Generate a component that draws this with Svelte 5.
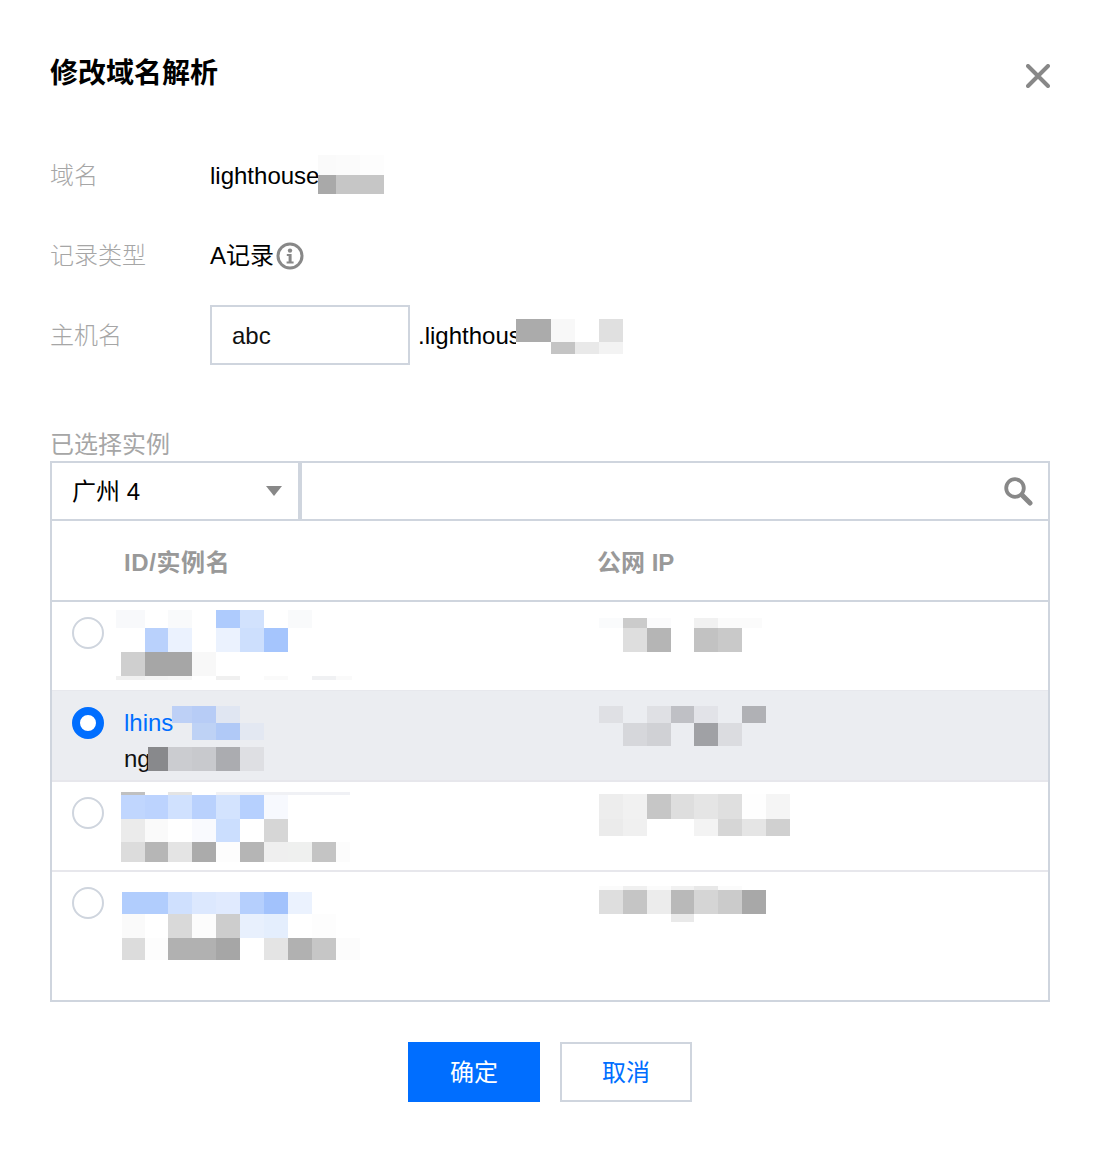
<script>
  // Mosaic cells that obscure private data: [x0, y0, x1, y1, colour] in page coordinates.
  const band = (y0, y1, cells) => cells.map(([x0, x1, c]) => [x0, y0, x1, y1, c]);
  const cells = [
    ...band(155, 175, [[318, 336, '#fafafa'], [336, 360, '#fbfbfb'], [360, 384, '#fdfdfd']]),
    ...band(175, 194, [[318, 336, '#a9a9a9'], [336, 384, '#c6c6c6']]),
    ...band(319, 342, [[516, 551, '#ababab'], [551, 575, '#f8f8f8'], [575, 599, '#fff'], [599, 623, '#e0e0e0']]),
    ...band(342, 354, [[516, 551, '#fff'], [551, 575, '#c4c4c4'], [575, 599, '#e9e9e9'], [599, 623, '#f3f3f3']]),

    ...band(610, 628, [[116, 145, '#f8f9fb'], [168, 192, '#f9fafb'], [216, 240, '#aecbfd'], [240, 264, '#d2e2fd'], [288, 312, '#f9fafb']]),
    ...band(628, 652, [[145, 168, '#b9d1fc'], [168, 192, '#ebf2fe'], [216, 240, '#ebf2fe'], [240, 264, '#cddffd'], [264, 288, '#a5c5fd']]),
    ...band(652, 676, [[121, 145, '#cfcfcf'], [145, 168, '#a6a6a6'], [168, 192, '#a6a6a6'], [192, 216, '#f8f8f8']]),
    ...band(676, 680, [[116, 145, '#f0f0f0'], [145, 168, '#f4f4f4'], [168, 192, '#f6f6f6'], [216, 240, '#f0f0f0'], [264, 288, '#fafafa'], [312, 336, '#f0f1f3'], [336, 352, '#fafafa']]),

    ...band(706, 723, [[172, 192, '#bdd0f6'], [192, 216, '#b7ccf6'], [216, 240, '#e0e6f2']]),
    ...band(723, 740, [[192, 216, '#bed2f5'], [216, 240, '#b0c9f7'], [240, 264, '#e3e8f2']]),
    ...band(747, 771, [[148, 168, '#88898c'], [168, 192, '#cbccd0'], [192, 216, '#c8c9cd'], [216, 240, '#abacb0'], [240, 264, '#dedfe3']]),

    ...band(792, 795, [[121, 145, '#c0c0c0'], [168, 192, '#e4e4e4'], [216, 350, '#f0f1f5']]),
    ...band(795, 819, [[121, 145, '#c0d6fe'], [145, 168, '#bcd3fe'], [168, 192, '#d0e1fe'], [192, 216, '#b9d1fd'], [216, 240, '#d3e3fe'], [240, 264, '#b6d0fe'], [264, 288, '#f7f9fe']]),
    ...band(819, 842, [[121, 145, '#ebebeb'], [145, 168, '#fafafa'], [192, 216, '#f9fafe'], [216, 240, '#cbdefe'], [264, 288, '#d6d6d6']]),
    ...band(842, 862, [[121, 145, '#dcdcdc'], [145, 168, '#b6b6b6'], [168, 192, '#e4e4e4'], [192, 216, '#ababab'], [216, 240, '#fdfdfd'], [240, 264, '#b5b5b5'], [264, 288, '#efefef'], [288, 312, '#eff0ef'], [312, 336, '#c4c4c4'], [336, 350, '#fcfcfc']]),

    ...band(892, 914, [[122, 168, '#b1cdfd'], [168, 192, '#cfe0fe'], [192, 216, '#dce8fe'], [216, 240, '#e0eafe'], [240, 264, '#b5cffd'], [264, 288, '#a2c2fc'], [288, 312, '#ebf2fe']]),
    ...band(914, 938, [[122, 145, '#fafafa'], [168, 192, '#d9d9d9'], [192, 216, '#fcfcfc'], [216, 240, '#cdcdcd'], [240, 264, '#e8f0fd'], [264, 288, '#e4eefd'], [312, 336, '#fdfdfd']]),
    ...band(938, 960, [[122, 145, '#dcdcdc'], [145, 168, '#fdfdfd'], [168, 216, '#b1b1b1'], [216, 240, '#a6a6a6'], [264, 288, '#e4e4e4'], [288, 312, '#b1b1b1'], [312, 336, '#c6c6c6'], [336, 360, '#fcfcfc']]),

    ...band(618, 628, [[599, 623, '#fafbfc'], [623, 647, '#cbcbcb'], [647, 671, '#fbfbfc'], [694, 718, '#f1f1f1'], [718, 762, '#fbfbfb']]),
    ...band(628, 652, [[623, 647, '#dedede'], [647, 671, '#b5b5b5'], [694, 718, '#c2c2c2'], [718, 742, '#c9c9c9']]),
    ...band(706, 723, [[599, 623, '#dfe0e4'], [647, 671, '#dfe0e4'], [671, 694, '#bfc0c5'], [694, 718, '#e2e3e8'], [742, 766, '#b0b1b5']]),
    ...band(723, 746, [[623, 647, '#d6d7db'], [647, 671, '#d0d1d5'], [694, 718, '#a0a1a5'], [718, 742, '#dbdce0']]),
    ...band(794, 819, [[599, 623, '#ededed'], [623, 647, '#f1f1f1'], [647, 671, '#c6c6c6'], [671, 694, '#dedede'], [694, 718, '#e5e5e5'], [718, 742, '#dfdfdf'], [742, 766, '#fefefe'], [766, 790, '#f5f5f5']]),
    ...band(819, 836, [[599, 623, '#ebebeb'], [623, 647, '#f0f0f0'], [694, 718, '#f3f3f3'], [718, 742, '#d6d6d6'], [742, 766, '#e5e5e5'], [766, 790, '#d0d0d0']]),
    ...band(886, 890, [[599, 623, '#fbfbfb'], [623, 647, '#f0f0f0'], [647, 671, '#fbfbfb'], [671, 694, '#f1f1f1'], [694, 718, '#e8e8e8'], [718, 742, '#fbfbfb']]),
    ...band(890, 914, [[599, 623, '#dedede'], [623, 647, '#c5c5c5'], [647, 671, '#ececec'], [671, 694, '#b9b9b9'], [694, 718, '#d5d5d5'], [718, 742, '#cbcbcb'], [742, 766, '#a8a8a8']]),
    ...band(914, 922, [[671, 694, '#e9e9e9']])
  ];
</script>

<div class="dialog">
  <div class="head">
    <h1>修改域名解析</h1>
    <svg class="close" width="24" height="24" viewBox="0 0 24 24" aria-label="关闭">
      <path d="M2 2 L22 22 M22 2 L2 22" stroke="#888" stroke-width="4" stroke-linecap="round" />
    </svg>
  </div>

  <div class="fields">
    <div class="field">
      <span class="label">域名</span>
      <span>lighthouse</span>
    </div>
    <div class="field">
      <span class="label">记录类型</span>
      <span>A记录</span>
      <svg class="info" width="28" height="28" viewBox="0 0 28 28" aria-label="说明">
        <circle cx="14" cy="14" r="12" fill="none" stroke="#888" stroke-width="3" />
        <circle cx="14" cy="8.6" r="2.2" fill="#888" />
        <path d="M10.8 12 H15.6 V19.4 H17.6 V21.4 H10.6 V19.4 H12.6 V14 H10.8 Z" fill="#888" />
      </svg>
    </div>
    <div class="field">
      <span class="label">主机名</span>
      <div class="input">abc</div>
      <span class="suffix">.lighthous</span>
    </div>
  </div>

  <div class="caption">已选择实例</div>
  <div class="picker">
    <div class="filter">
      <div class="select">
        <span class="select-value">广州 4</span>
        <span class="arrow"></span>
      </div>
      <div class="search">
        <svg width="30" height="30" viewBox="0 0 30 30" aria-label="搜索">
          <circle cx="12" cy="12" r="8.8" fill="none" stroke="#888" stroke-width="3.8" />
          <path d="M19.5 19.5 L27 27" stroke="#888" stroke-width="5" stroke-linecap="round" />
        </svg>
      </div>
    </div>

    <div class="thead">
      <span class="col-name">ID/实例名</span>
      <span class="col-ip">公网 IP</span>
    </div>

    <div class="row first"><span class="radio"></span></div>
    <div class="row selected">
      <span class="radio on"></span>
      <div class="name">
        <div class="link">lhins</div>
        <div>ng</div>
      </div>
    </div>
    <div class="row third"><span class="radio"></span></div>
    <div class="row last"><span class="radio"></span></div>
  </div>

  <div class="footer">
    <button class="btn primary">确定</button>
    <button class="btn">取消</button>
  </div>

  {#each cells as [x0, y0, x1, y1, c]}
    <i class="cell" style="left:{x0}px;top:{y0}px;width:{x1 - x0}px;height:{y1 - y0}px;background:{c}"></i>
  {/each}
</div>

<style>
  :global(body) {
    margin: 0;
    background: #fff;
  }
  .dialog {
    position: relative;
    box-sizing: border-box;
    width: 1098px;
    height: 1152px;
    padding: 52px 48px 0 50px;
    font-family: "Liberation Sans", "Noto Sans CJK SC", sans-serif;
    font-size: 24px;
    line-height: 36px;
    color: #000;
    overflow: hidden;
  }
  .head {
    display: flex;
    justify-content: space-between;
    align-items: flex-start;
    height: 40px;
  }
  h1 {
    margin: 0;
    font-size: 28px;
    line-height: 44px;
    font-weight: 700;
  }
  .close {
    margin-top: 12px;
  }
  .fields {
    display: flex;
    flex-direction: column;
    gap: 20px;
    margin-top: 53px;
  }
  .field {
    display: flex;
    align-items: center;
    height: 60px;
  }
  .field > span {
    padding-top: 2px;
  }
  .label {
    width: 160px;
    color: #a6a6a6;
    font-weight: 300;
  }
  .info {
    margin: 2px 0 0 2px;
  }
  .input {
    box-sizing: border-box;
    width: 200px;
    height: 60px;
    padding: 0 20px;
    border: 2px solid #cfd5de;
    line-height: 58px;
    color: #111;
  }
  .suffix {
    margin-left: 8px;
  }
  .caption {
    box-sizing: border-box;
    height: 36px;
    margin-top: 60px;
    padding-top: 2px;
    color: #a6a6a6;
  }
  .picker {
    box-sizing: border-box;
    height: 541px;
    border: 2px solid #cfd5de;
  }
  .filter {
    display: flex;
    height: 58px;
    border-bottom: 2px solid #cfd5de;
    box-sizing: border-box;
  }
  .select {
    box-sizing: border-box;
    display: flex;
    align-items: center;
    justify-content: space-between;
    width: 250px;
    padding: 0 16px 0 20px;
    border-right: 4px solid #cfd5de;
  }
  .select-value {
    padding-top: 2px;
  }
  .arrow {
    width: 0;
    height: 0;
    border-left: 8px solid transparent;
    border-right: 8px solid transparent;
    border-top: 10px solid #888;
  }
  .search {
    flex: 1;
    display: flex;
    align-items: center;
    justify-content: flex-end;
    padding-right: 15px;
  }
  .thead {
    box-sizing: border-box;
    display: flex;
    align-items: center;
    height: 81px;
    padding-top: 4px;
    border-bottom: 2px solid #cfd5de;
    font-weight: 700;
    color: #999;
  }
  .col-name {
    width: 473px;
    margin-left: 72px;
    letter-spacing: 0.6px;
  }
  .row {
    box-sizing: border-box;
    display: flex;
    align-items: flex-start;
    padding: 15px 0 0 20px;
  }
  .first {
    height: 88px;
  }
  .selected {
    height: 92px;
    padding-top: 16px;
    background: #ebedf1;
    border-top: 1px solid #e7e8ed;
    border-bottom: 2px solid #e7e7ec;
  }
  .third {
    height: 90px;
    padding-top: 15px;
    border-bottom: 2px solid #e7e7ec;
  }
  .last {
    height: 128px;
  }
  .radio {
    box-sizing: border-box;
    flex: none;
    width: 32px;
    height: 32px;
    border: 2px solid #cfd5de;
    border-radius: 50%;
    background: #fff;
  }
  .radio.on {
    border: 8px solid #006eff;
  }
  .name {
    margin: -2px 0 0 20px;
    color: #111;
  }
  .link {
    color: #006eff;
  }
  .footer {
    display: flex;
    justify-content: center;
    gap: 20px;
    margin-top: 40px;
  }
  .btn {
    box-sizing: border-box;
    width: 132px;
    height: 60px;
    padding: 2px 0 0;
    border: 2px solid #cfd5de;
    border-radius: 0;
    background: #fff;
    color: #006eff;
    font: inherit;
  }
  .btn.primary {
    border-color: #006eff;
    background: #006eff;
    color: #fff;
  }
  .cell {
    position: absolute;
    display: block;
  }
</style>
